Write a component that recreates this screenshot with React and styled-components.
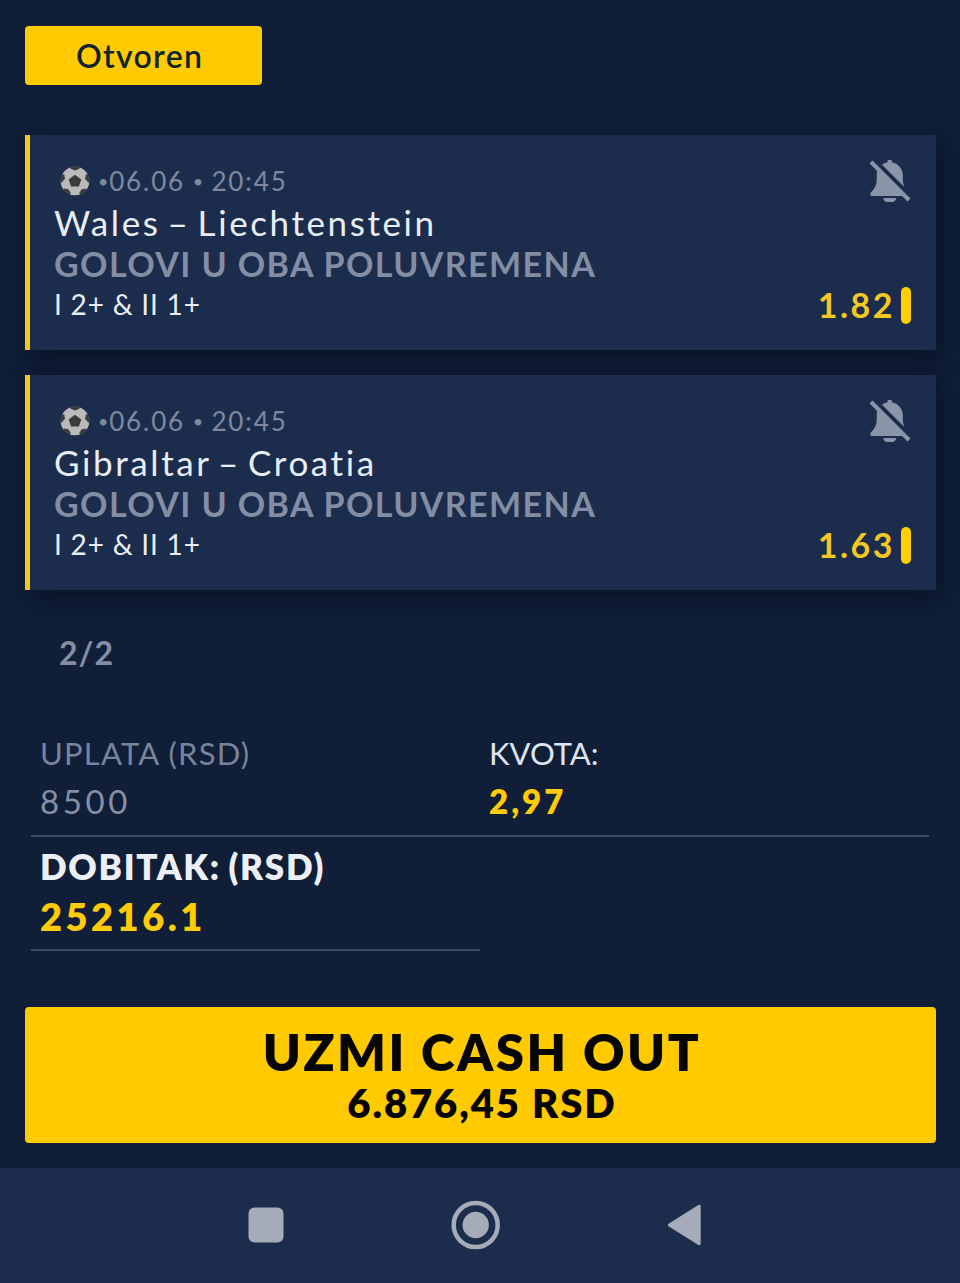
import React from "react";
import styled, { createGlobalStyle } from "styled-components";

const GlobalStyle = createGlobalStyle`
  * {
    box-sizing: border-box;
  }
  body {
    margin: 0;
    background: #101e38;
    font-family: Lato, "Open Sans", sans-serif;
  }
`;

const matches = [
  {
    date: "06.06",
    time: "20:45",
    teams: "Wales – Liechtenstein",
    game: "GOLOVI U OBA POLUVREMENA",
    pick: "I 2+ & II 1+",
    odd: "1.82",
  },
  {
    date: "06.06",
    time: "20:45",
    teams: "Gibraltar – Croatia",
    game: "GOLOVI U OBA POLUVREMENA",
    pick: "I 2+ & II 1+",
    odd: "1.63",
  },
];

const BallIcon = () => (
  <svg width="30" height="30" viewBox="0 0 30 30">
    <defs>
      <clipPath id="ball">
        <circle cx="15" cy="15" r="14.5" />
      </clipPath>
    </defs>
    <g clipPath="url(#ball)">
      <circle cx="15" cy="15" r="14.5" fill="#bababa" />
      <g fill="#3b3b3d">
        <path d="M15 8.8l6.3 4.6-2.4 7.200h-7.800l-2.400-7.200z" />
        <path d="M9 0h12l-2 3L15 4.600 11 3z" />
        <path d="M0 8l4.200.6L5 12.800 1.800 16.500 0 16z" />
        <path d="M30 8l-4.200.6-.8 4.200 3.200 3.700L30 16z" />
        <path d="M3.500 22.500l4.800.7 2.200 3.300-.3 3.500H5z" />
        <path d="M26.500 22.500l-4.800.7-2.200 3.300.3 3.500H25z" />
      </g>
    </g>
  </svg>
);

const BellOffIcon = () => (
  <svg width="42" height="43" viewBox="-0.500 0 42 43" fill="#8b95aa">
    <path d="M12.500 4.800C14 3.600 16 2.700 18 2.300V1q0-1 1-1h2.400q1 0 1 1v1.300C29 3.600 33.400 9 33.400 16v5l1.100 5.800z" />
    <path d="M7.400 9.500L34 36H2q-1 0-1-1v-2.300C5 29.200 7.200 25 7.200 20z" />
    <path d="M13.700 38h13q-.8 4-4 4h-5q-3.200 0-4-4z" />
    <path d="M1.500 2l38 38" stroke="#8b95aa" strokeWidth="4" />
  </svg>
);

const App = () => {
  return (
    <>
      <GlobalStyle />
      <Screen>
        <Ticket>
          <Status>Otvoren</Status>
          <Matches>
            {matches.map((m) => (
              <Card key={m.teams}>
                <Info>
                  <Time>
                    <BallIcon />
                    <span>
                      <Dot>•</Dot>
                      {m.date} <Dot>•</Dot> {m.time}
                    </span>
                  </Time>
                  <Teams>{m.teams}</Teams>
                  <Game>{m.game}</Game>
                  <Pick>{m.pick}</Pick>
                </Info>
                <Side>
                  <BellOffIcon />
                  <Odd>
                    <OddValue>{m.odd}</OddValue>
                    <OddBar />
                  </Odd>
                </Side>
              </Card>
            ))}
          </Matches>
          <Count>2/2</Count>
          <Summary>
            <Cell>
              <Label>UPLATA (RSD)</Label>
              <Value>8500</Value>
            </Cell>
            <Cell>
              <Label $white>KVOTA:</Label>
              <Value $yellow>2,97</Value>
            </Cell>
            <Cell $tall>
              <WinLabel>DOBITAK: (RSD)</WinLabel>
              <WinValue>25216.1</WinValue>
            </Cell>
          </Summary>
          <CashOut>
            <CashTitle>UZMI CASH OUT</CashTitle>
            <CashAmount>6.876,45 RSD</CashAmount>
          </CashOut>
        </Ticket>
        <NavBar>
          <svg width="36" height="36" viewBox="0 0 36 36">
            <rect x="0.500" y="0.500" width="35" height="35" rx="6" fill="#a5abb8" />
          </svg>
          <svg width="50" height="50" viewBox="0 0 50 50">
            <circle cx="24.700" cy="25" r="22" fill="none" stroke="#a5abb8" strokeWidth="4.500" />
            <circle cx="24.700" cy="25" r="13.200" fill="#a5abb8" />
          </svg>
          <svg width="34" height="42" viewBox="0 0 34 42">
            <path
              d="M1.300 21L31.200 2.200v37.600z"
              fill="#a5abb8"
              stroke="#a5abb8"
              strokeWidth="3"
              strokeLinejoin="round"
            />
          </svg>
        </NavBar>
      </Screen>
    </>
  );
};

export default App;

const Screen = styled.div`
  display: flex;
  flex-direction: column;
  height: 1283px;
  overflow: hidden;
  background: #101e38;
`;

const Ticket = styled.div`
  display: flex;
  flex-direction: column;
  height: 1168px;
  padding: 26px 24px 25px 25px;
`;

const Status = styled.div`
  width: 237px;
  height: 59px;
  padding-left: 51px;
  border-radius: 4px;
  background: #ffcb00;
  color: #10242e;
  font-size: 32px;
  font-weight: 600;
  line-height: 59px;
  letter-spacing: 1.3px;
`;

const Matches = styled.div`
  display: flex;
  flex-direction: column;
  gap: 25px;
  margin-top: 50px;
`;

const Card = styled.div`
  display: flex;
  justify-content: space-between;
  height: 215px;
  padding: 25px 25px 0 24px;
  border-left: 5px solid #f5c81c;
  background: #1c2c4c;
  box-shadow: 5px 8px 22px rgba(4, 12, 28, 0.6);
`;

const Info = styled.div`
  display: flex;
  flex-direction: column;
  white-space: nowrap;
`;

const Time = styled.div`
  display: flex;
  align-items: center;
  gap: 8px;
  height: 41px;
  padding-left: 6px;
  color: #7e899f;
  font-size: 26px;
  line-height: 40px;
  letter-spacing: 1.9px;
  word-spacing: -1px;
`;

const Dot = styled.span`
  font-size: 18px;
  line-height: 1;
  letter-spacing: 0.7px;
  vertical-align: 3px;
`;

const Teams = styled.div`
  height: 42px;
  color: #e9edf5;
  font-size: 35px;
  line-height: 43px;
  letter-spacing: 2.6px;
  word-spacing: -4.5px;
`;

const Game = styled.div`
  height: 41px;
  color: #838ea5;
  font-size: 34px;
  font-weight: 700;
  line-height: 41px;
  letter-spacing: 1.4px;
`;

const Pick = styled.div`
  height: 40px;
  color: #e9edf5;
  font-size: 28px;
  line-height: 41px;
  letter-spacing: 0.8px;
`;

const Side = styled.div`
  display: flex;
  flex-direction: column;
  align-items: flex-end;
  justify-content: space-between;
  height: 164px;
`;

const Odd = styled.div`
  display: flex;
  align-items: flex-start;
  gap: 6px;
  height: 37px;
`;

const OddValue = styled.span`
  color: #f3c921;
  font-size: 34px;
  font-weight: 700;
  line-height: 35px;
  letter-spacing: 2.5px;
`;

const OddBar = styled.span`
  width: 10px;
  height: 37px;
  border-radius: 5px;
  background: #ffcf00;
`;

const Count = styled.div`
  margin: 43px 0 0 34px;
  height: 41px;
  color: #838ea5;
  font-size: 32px;
  font-weight: 700;
  line-height: 40px;
  letter-spacing: 1px;
`;

const Summary = styled.div`
  display: grid;
  grid-template-columns: 449px 449px;
  grid-template-rows: 107px 114px;
  margin: 56px 0 0 6px;
`;

const Cell = styled.div`
  padding: ${(p) => (p.$tall ? "5px" : "0")} 0 0 9px;
  border-bottom: 2px solid #3d4a66;
  white-space: nowrap;
`;

const Label = styled.div`
  height: 48px;
  color: ${(p) => (p.$white ? "#dfe4ee" : "#78849b")};
  font-size: 31px;
  line-height: 46px;
  letter-spacing: ${(p) => (p.$white ? 0 : 1.2)}px;
`;

const Value = styled.div`
  height: 49px;
  color: ${(p) => (p.$yellow ? "#ffcb05" : "#8590a5")};
  font-size: 33px;
  font-weight: ${(p) => (p.$yellow ? 800 : 400)};
  line-height: 47px;
  letter-spacing: ${(p) => (p.$yellow ? 3 : 3.6)}px;
`;

const WinLabel = styled.div`
  height: 50px;
  color: #eceff5;
  font-size: 35px;
  font-weight: 800;
  line-height: 49px;
  letter-spacing: 1.7px;
  word-spacing: -2px;
`;

const WinValue = styled.div`
  height: 50px;
  color: #ffcb05;
  font-size: 38px;
  font-weight: 800;
  line-height: 49px;
  letter-spacing: 3.5px;
`;

const CashOut = styled.div`
  display: flex;
  flex-direction: column;
  align-items: center;
  height: 136px;
  margin-top: auto;
  padding: 17px 0 0 3px;
  border-radius: 4px;
  background: #ffcb00;
  color: #050505;
  font-weight: 800;
`;

const CashTitle = styled.div`
  height: 55px;
  font-size: 51px;
  line-height: 56px;
  letter-spacing: 2.5px;
`;

const CashAmount = styled.div`
  height: 48px;
  font-size: 40px;
  line-height: 48px;
  letter-spacing: 1.9px;
`;

const NavBar = styled.div`
  display: flex;
  align-items: center;
  flex: 1;
  gap: 167px;
  padding: 0 0 1px 248px;
  background: #1c2c4c;
`;
